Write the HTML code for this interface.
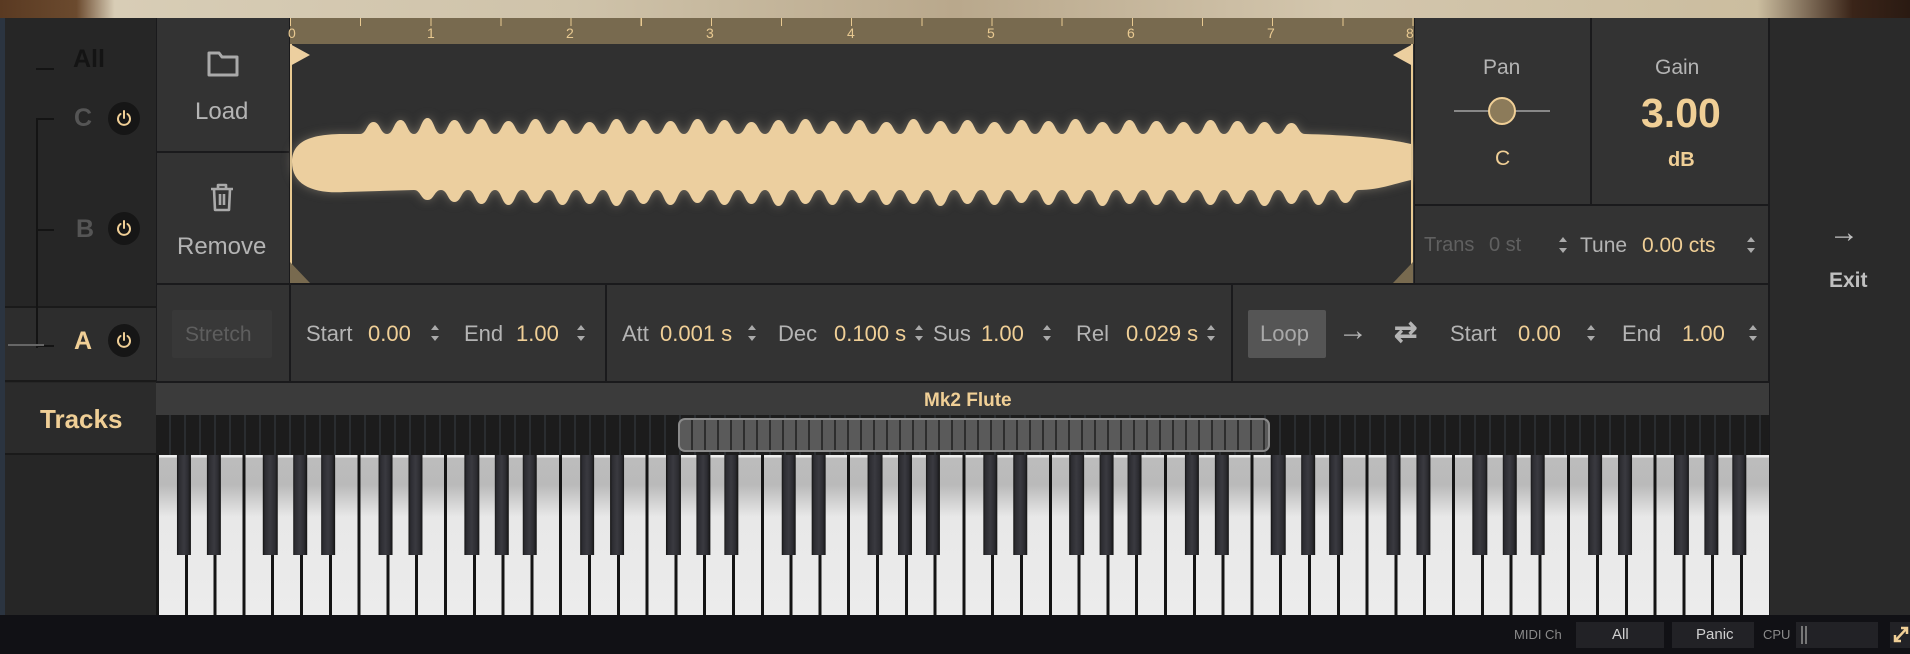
<!DOCTYPE html>
<html><head><meta charset="utf-8"><style>
*{margin:0;padding:0;box-sizing:border-box}
body{width:1910px;height:654px;overflow:hidden;background:#1a1a1c;font-family:"Liberation Sans",sans-serif;position:relative}
.a{position:absolute}
.t{position:absolute;white-space:nowrap;line-height:1}
.g{color:#b4b4b4}.v{color:#f0cf96}
.p{background:#333333}
.arr{position:absolute;width:8px;height:16px}
.arr:before{content:"";position:absolute;left:0;top:0;border-left:4px solid transparent;border-right:4px solid transparent;border-bottom:5px solid #aaa}
.arr:after{content:"";position:absolute;left:0;bottom:0;border-left:4px solid transparent;border-right:4px solid transparent;border-top:5px solid #aaa}
.pw{position:absolute;width:32px;height:33px;border-radius:50%;background:#161616}
.pw svg{position:absolute;left:8px;top:8px}
</style></head><body>
<div class="a" style="left:0;top:0;width:1910px;height:18px;background:linear-gradient(90deg,#5a3a22 0,#6b4a2e 4%,#d8cdb6 6%,#cfc3aa 30%,#b9a88c 50%,#d3c6ad 70%,#cbbd9f 92%,#3a2418 97%,#2a1a12 100%)"></div>
<div class="a" style="left:0;top:18px;width:5px;height:600px;background:#2b3440"></div>
<div class="a" style="left:5px;top:18px;width:151px;height:597px;background:#262626"></div>
<div class="a" style="left:5px;top:306px;width:151px;height:76px;background:#2d2d2d;border-top:2px solid #1a1a1a;border-bottom:2px solid #1a1a1a"></div>
<div class="a" style="left:5px;top:383px;width:151px;height:72px;background:#2b2b2b;border-bottom:2px solid #1a1a1a"></div>
<div class="a" style="left:36px;top:118px;width:2px;height:230px;background:#141414"></div>
<div class="a" style="left:36px;top:68px;width:18px;height:2px;background:#141414"></div>
<div class="a" style="left:36px;top:118px;width:18px;height:2px;background:#141414"></div>
<div class="a" style="left:36px;top:229px;width:18px;height:2px;background:#141414"></div>
<div class="a" style="left:36px;top:345px;width:18px;height:2px;background:#141414"></div>
<div class="a" style="left:8px;top:344px;width:36px;height:2px;background:#666"></div>
<div class="t" style="left:73px;top:47px;font-size:25px;font-weight:bold;color:#141414">All</div>
<div class="t" style="left:74px;top:106px;font-size:25px;font-weight:bold;color:#555">C</div>
<div class="t" style="left:76px;top:217px;font-size:25px;font-weight:bold;color:#555">B</div>
<div class="t" style="left:74px;top:329px;font-size:25px;font-weight:bold;color:#f0cf96">A</div>
<div class="pw" style="left:108px;top:102px"><svg width="16" height="17" viewBox="0 0 16 17"><path d="M8 1v7M4.5 4a6 6 0 1 0 7 0" fill="none" stroke="#f0cf96" stroke-width="2" stroke-linecap="round"/></svg></div>
<div class="pw" style="left:108px;top:212px"><svg width="16" height="17" viewBox="0 0 16 17"><path d="M8 1v7M4.5 4a6 6 0 1 0 7 0" fill="none" stroke="#f0cf96" stroke-width="2" stroke-linecap="round"/></svg></div>
<div class="pw" style="left:108px;top:324px"><svg width="16" height="17" viewBox="0 0 16 17"><path d="M8 1v7M4.5 4a6 6 0 1 0 7 0" fill="none" stroke="#f0cf96" stroke-width="2" stroke-linecap="round"/></svg></div>
<div class="t" style="left:40px;top:406px;font-size:26px;font-weight:bold;color:#f0cf96">Tracks</div>
<div class="a p" style="left:157px;top:18px;width:132px;height:133px"></div>
<div class="a p" style="left:157px;top:153px;width:132px;height:130px"></div>
<svg class="a" style="left:207px;top:50px" width="32" height="27" viewBox="0 0 32 27"><path d="M2 3h10l3 4h15v18H2z" fill="none" stroke="#aaa" stroke-width="3" stroke-linejoin="round"/></svg>
<div class="t g" style="left:195px;top:100px;font-size:24px">Load</div>
<svg class="a" style="left:209px;top:183px" width="26" height="29" viewBox="0 0 26 29"><path d="M2 6h22M9 6V2h8v4M5 6l1 21h14l1-21M11 11v11M15 11v11" fill="none" stroke="#aaa" stroke-width="2.6" stroke-linejoin="round"/></svg>
<div class="t g" style="left:177px;top:235px;font-size:24px">Remove</div>
<div class="a" style="left:290px;top:18px;width:1124px;height:265px;background:#303030"></div>
<div class="a" style="left:290px;top:18px;width:1124px;height:26px;background:#786a4f"></div>
<div class="a" style="left:290px;top:18px;width:1124px;height:26px;background:repeating-linear-gradient(90deg,#e8c991 0 1px,transparent 1px 70.15px);clip-path:inset(0 0 18px 0)"></div>
<div class="t" style="left:288px;top:26px;font-size:14px;color:#e8c991">0</div>
<div class="t" style="left:427px;top:26px;font-size:14px;color:#e8c991">1</div>
<div class="t" style="left:566px;top:26px;font-size:14px;color:#e8c991">2</div>
<div class="t" style="left:706px;top:26px;font-size:14px;color:#e8c991">3</div>
<div class="t" style="left:847px;top:26px;font-size:14px;color:#e8c991">4</div>
<div class="t" style="left:987px;top:26px;font-size:14px;color:#e8c991">5</div>
<div class="t" style="left:1127px;top:26px;font-size:14px;color:#e8c991">6</div>
<div class="t" style="left:1267px;top:26px;font-size:14px;color:#e8c991">7</div>
<div class="t" style="left:1406px;top:26px;font-size:14px;color:#e8c991">8</div>
<div class="a" style="left:290px;top:44px;width:2px;height:239px;background:#e8c991"></div>
<div class="a" style="left:1411px;top:44px;width:2px;height:239px;background:#e8c991"></div>
<svg class="a" style="left:290px;top:44px;overflow:visible;filter:drop-shadow(0 0 5px rgba(170,160,140,.5))" width="1123" height="239" viewBox="0 0 1123 239"><path fill="#eccf9f" d="M2,118 C2,95 25,90 55,90 L70,90 c6.75,0 6.75,-12 13.5,-12 c6.75,0 6.75,12 13.5,12 c6.75,0 6.75,-14 13.5,-14 c6.75,0 6.75,14 13.5,14 c6.75,0 6.75,-16 13.5,-16 c6.75,0 6.75,16 13.5,16 c6.75,0 6.75,-14 13.5,-14 c6.75,0 6.75,14 13.5,14 c6.75,0 6.75,-15 13.5,-15 c6.75,0 6.75,15 13.5,15 c6.75,0 6.75,-13 13.5,-13 c6.75,0 6.75,13 13.5,13 c6.75,0 6.75,-15 13.5,-15 c6.75,0 6.75,15 13.5,15 c6.75,0 6.75,-14 13.5,-14 c6.75,0 6.75,14 13.5,14 c6.75,0 6.75,-12 13.5,-12 c6.75,0 6.75,12 13.5,12 c6.75,0 6.75,-15 13.5,-15 c6.75,0 6.75,15 13.5,15 c6.75,0 6.75,-14 13.5,-14 c6.75,0 6.75,14 13.5,14 c6.75,0 6.75,-13 13.5,-13 c6.75,0 6.75,13 13.5,13 c6.75,0 6.75,-15 13.5,-15 c6.75,0 6.75,15 13.5,15 c6.75,0 6.75,-14 13.5,-14 c6.75,0 6.75,14 13.5,14 c6.75,0 6.75,-12 13.5,-12 c6.75,0 6.75,12 13.5,12 c6.75,0 6.75,-14 13.5,-14 c6.75,0 6.75,14 13.5,14 c6.75,0 6.75,-15 13.5,-15 c6.75,0 6.75,15 13.5,15 c6.75,0 6.75,-13 13.5,-13 c6.75,0 6.75,13 13.5,13 c6.75,0 6.75,-14 13.5,-14 c6.75,0 6.75,14 13.5,14 c6.75,0 6.75,-12 13.5,-12 c6.75,0 6.75,12 13.5,12 c6.75,0 6.75,-15 13.5,-15 c6.75,0 6.75,15 13.5,15 c6.75,0 6.75,-13 13.5,-13 c6.75,0 6.75,13 13.5,13 c6.75,0 6.75,-14 13.5,-14 c6.75,0 6.75,14 13.5,14 c6.75,0 6.75,-12 13.5,-12 c6.75,0 6.75,12 13.5,12 c6.75,0 6.75,-14 13.5,-14 c6.75,0 6.75,14 13.5,14 c6.75,0 6.75,-13 13.5,-13 c6.75,0 6.75,13 13.5,13 c6.75,0 6.75,-15 13.5,-15 c6.75,0 6.75,15 13.5,15 c6.75,0 6.75,-12 13.5,-12 c6.75,0 6.75,12 13.5,12 c6.75,0 6.75,-14 13.5,-14 c6.75,0 6.75,14 13.5,14 c6.75,0 6.75,-13 13.5,-13 c6.75,0 6.75,13 13.5,13 c6.75,0 6.75,-12 13.5,-12 c6.75,0 6.75,12 13.5,12 c6.75,0 6.75,-14 13.5,-14 c6.75,0 6.75,14 13.5,14 c6.75,0 6.75,-13 13.5,-13 c6.75,0 6.75,13 13.5,13 c6.75,0 6.75,-12 13.5,-12 c6.75,0 6.75,12 13.5,12 c6.75,0 6.75,-11 13.5,-11 c6.75,0 6.75,11 13.5,11 C1090,92 1110,98 1121,100 L1121,136 C1110,138 1090,146 1069,146 c-6.75,0 -6.75,13 -13.5,13 c-6.75,0 -6.75,-13 -13.5,-13 c-6.75,0 -6.75,15 -13.5,15 c-6.75,0 -6.75,-15 -13.5,-15 c-6.75,0 -6.75,14 -13.5,14 c-6.75,0 -6.75,-14 -13.5,-14 c-6.75,0 -6.75,16 -13.5,16 c-6.75,0 -6.75,-16 -13.5,-16 c-6.75,0 -6.75,14 -13.5,14 c-6.75,0 -6.75,-14 -13.5,-14 c-6.75,0 -6.75,15 -13.5,15 c-6.75,0 -6.75,-15 -13.5,-15 c-6.75,0 -6.75,13 -13.5,13 c-6.75,0 -6.75,-13 -13.5,-13 c-6.75,0 -6.75,15 -13.5,15 c-6.75,0 -6.75,-15 -13.5,-15 c-6.75,0 -6.75,14 -13.5,14 c-6.75,0 -6.75,-14 -13.5,-14 c-6.75,0 -6.75,16 -13.5,16 c-6.75,0 -6.75,-16 -13.5,-16 c-6.75,0 -6.75,14 -13.5,14 c-6.75,0 -6.75,-14 -13.5,-14 c-6.75,0 -6.75,15 -13.5,15 c-6.75,0 -6.75,-15 -13.5,-15 c-6.75,0 -6.75,13 -13.5,13 c-6.75,0 -6.75,-13 -13.5,-13 c-6.75,0 -6.75,15 -13.5,15 c-6.75,0 -6.75,-15 -13.5,-15 c-6.75,0 -6.75,14 -13.5,14 c-6.75,0 -6.75,-14 -13.5,-14 c-6.75,0 -6.75,16 -13.5,16 c-6.75,0 -6.75,-16 -13.5,-16 c-6.75,0 -6.75,14 -13.5,14 c-6.75,0 -6.75,-14 -13.5,-14 c-6.75,0 -6.75,15 -13.5,15 c-6.75,0 -6.75,-15 -13.5,-15 c-6.75,0 -6.75,13 -13.5,13 c-6.75,0 -6.75,-13 -13.5,-13 c-6.75,0 -6.75,15 -13.5,15 c-6.75,0 -6.75,-15 -13.5,-15 c-6.75,0 -6.75,14 -13.5,14 c-6.75,0 -6.75,-14 -13.5,-14 c-6.75,0 -6.75,16 -13.5,16 c-6.75,0 -6.75,-16 -13.5,-16 c-6.75,0 -6.75,14 -13.5,14 c-6.75,0 -6.75,-14 -13.5,-14 c-6.75,0 -6.75,15 -13.5,15 c-6.75,0 -6.75,-15 -13.5,-15 c-6.75,0 -6.75,13 -13.5,13 c-6.75,0 -6.75,-13 -13.5,-13 c-6.75,0 -6.75,15 -13.5,15 c-6.75,0 -6.75,-15 -13.5,-15 c-6.75,0 -6.75,14 -13.5,14 c-6.75,0 -6.75,-14 -13.5,-14 c-6.75,0 -6.75,16 -13.5,16 c-6.75,0 -6.75,-16 -13.5,-16 c-6.75,0 -6.75,14 -13.5,14 c-6.75,0 -6.75,-14 -13.5,-14 c-6.75,0 -6.75,15 -13.5,15 c-6.75,0 -6.75,-15 -13.5,-15 c-6.75,0 -6.75,13 -13.5,13 c-6.75,0 -6.75,-13 -13.5,-13 c-6.75,0 -6.75,15 -13.5,15 c-6.75,0 -6.75,-15 -13.5,-15 c-6.75,0 -6.75,14 -13.5,14 c-6.75,0 -6.75,-14 -13.5,-14 c-6.75,0 -6.75,12 -13.5,12 c-6.75,0 -6.75,-12 -13.5,-12 c-6.75,0 -6.75,10 -13.5,10 c-6.75,0 -6.75,-10 -13.5,-10 L55,148 C25,150 2,142 2,118 Z"/></svg>
<svg class="a" style="left:290px;top:44px" width="22" height="22"><path d="M0 0L20 11L0 22Z" fill="#eccf9f"/></svg>
<svg class="a" style="left:1391px;top:44px" width="22" height="22"><path d="M22 0L2 11L22 22Z" fill="#eccf9f"/></svg>
<svg class="a" style="left:290px;top:262px" width="22" height="21"><path d="M0 0L20 21L0 21Z" fill="#786a4f"/></svg>
<svg class="a" style="left:1391px;top:262px" width="22" height="21"><path d="M22 0L2 21L22 21Z" fill="#786a4f"/></svg>
<div class="a p" style="left:1415px;top:18px;width:175px;height:186px"></div>
<div class="a p" style="left:1592px;top:18px;width:176px;height:186px"></div>
<div class="t g" style="left:1483px;top:57px;font-size:21px">Pan</div>
<div class="a" style="left:1454px;top:110px;width:96px;height:2px;background:#888"></div>
<div class="a" style="left:1488px;top:97px;width:28px;height:28px;border-radius:50%;background:#8c7b5a;border:2px solid #f0cf96"></div>
<div class="t v" style="left:1495px;top:148px;font-size:21px">C</div>
<div class="t g" style="left:1655px;top:57px;font-size:21px">Gain</div>
<div class="t v" style="left:1641px;top:93px;font-size:41px;font-weight:bold">3.00</div>
<div class="t v" style="left:1668px;top:150px;font-size:20px;font-weight:bold">dB</div>
<div class="a p" style="left:1415px;top:206px;width:353px;height:77px"></div>
<div class="t" style="left:1424px;top:235px;font-size:20px;color:#606060">Trans</div>
<div class="t" style="left:1489px;top:235px;font-size:20px;color:#606060">0 st</div>
<div class="arr" style="left:1559px;top:237px"></div>
<div class="t g" style="left:1580px;top:235px;font-size:21px">Tune</div>
<div class="t v" style="left:1642px;top:235px;font-size:21px">0.00 cts</div>
<div class="arr" style="left:1747px;top:237px"></div>
<div class="a" style="left:1770px;top:18px;width:140px;height:597px;background:#2a2a2a"></div>
<div class="t" style="left:1829px;top:218px;font-size:30px;font-weight:bold;color:#c0c0c0">→</div>
<div class="t" style="left:1829px;top:270px;font-size:21px;font-weight:bold;color:#c0c0c0">Exit</div>
<div class="a p" style="left:157px;top:285px;width:132px;height:96px"></div>
<div class="a" style="left:172px;top:310px;width:100px;height:48px;background:#383838;border-radius:2px"></div>
<div class="t" style="left:185px;top:324px;font-size:21px;color:#5e5e5e">Stretch</div>
<div class="a p" style="left:291px;top:285px;width:314px;height:96px"></div>
<div class="t g" style="left:306px;top:323px;font-size:22px">Start</div>
<div class="t v" style="left:368px;top:323px;font-size:22px">0.00</div>
<div class="arr" style="left:431px;top:325px"></div>
<div class="t g" style="left:464px;top:323px;font-size:22px">End</div>
<div class="t v" style="left:516px;top:323px;font-size:22px">1.00</div>
<div class="arr" style="left:577px;top:325px"></div>
<div class="a p" style="left:607px;top:285px;width:624px;height:96px"></div>
<div class="t g" style="left:622px;top:323px;font-size:22px">Att</div>
<div class="t v" style="left:660px;top:323px;font-size:22px">0.001 s</div>
<div class="arr" style="left:748px;top:325px"></div>
<div class="t g" style="left:778px;top:323px;font-size:22px">Dec</div>
<div class="t v" style="left:834px;top:323px;font-size:22px">0.100 s</div>
<div class="arr" style="left:915px;top:325px"></div>
<div class="t g" style="left:933px;top:323px;font-size:22px">Sus</div>
<div class="t v" style="left:981px;top:323px;font-size:22px">1.00</div>
<div class="arr" style="left:1043px;top:325px"></div>
<div class="t g" style="left:1076px;top:323px;font-size:22px">Rel</div>
<div class="t v" style="left:1126px;top:323px;font-size:22px">0.029 s</div>
<div class="arr" style="left:1207px;top:325px"></div>
<div class="a p" style="left:1233px;top:285px;width:535px;height:96px"></div>
<div class="a" style="left:1248px;top:310px;width:78px;height:48px;background:#555;border-radius:2px"></div>
<div class="t" style="left:1260px;top:323px;font-size:22px;color:#a8a8a8">Loop</div>
<div class="t g" style="left:1338px;top:316px;font-size:30px;font-weight:bold">→</div>
<div class="t g" style="left:1394px;top:318px;font-size:28px;font-weight:bold">⇄</div>
<div class="t g" style="left:1450px;top:323px;font-size:22px">Start</div>
<div class="t v" style="left:1518px;top:323px;font-size:22px">0.00</div>
<div class="arr" style="left:1587px;top:325px"></div>
<div class="t g" style="left:1622px;top:323px;font-size:22px">End</div>
<div class="t v" style="left:1682px;top:323px;font-size:22px">1.00</div>
<div class="arr" style="left:1749px;top:325px"></div>
<div class="a" style="left:156px;top:383px;width:1613px;height:32px;background:#3b3b3b"></div>
<div class="t v" style="left:924px;top:391px;font-size:19px;font-weight:bold">Mk2 Flute</div>
<div class="a" style="left:156px;top:415px;width:1613px;height:40px;background:#1c1c1c repeating-linear-gradient(90deg,#1c1c1c 0 13px,#2a2d30 13px 15px)"></div>
<div class="a" style="left:678px;top:418px;width:592px;height:34px;border-radius:7px;border:2px solid #8a8a8a;background:repeating-linear-gradient(90deg,#5a5a5a 0 11px,#2e2e2e 11px 13px)"></div>
<div class="a" style="left:156px;top:455px;width:1613px;height:160px;background:linear-gradient(#ededed 0 2px,#bcbcbc 3px,#bababa 30px,#e8e8e8 62px,#ececec 100%)"></div>
<div class="a" style="left:156px;top:455px;width:1613px;height:160px;background:repeating-linear-gradient(90deg,#141414 0 3px,transparent 3px 28.8px)"></div>
<div class="a" style="left:156px;top:455px;width:1613px;height:100px;background-image:linear-gradient(90deg,transparent 21px,#141414 21px,#2c2c31 23px,#3a3a40 28px,#2c2c31 32px,#141414 35px,transparent 35px,transparent 51px,#141414 51px,#2c2c31 53px,#3a3a40 58px,#2c2c31 62px,#141414 65px,transparent 65px,transparent 107px,#141414 107px,#2c2c31 109px,#3a3a40 114px,#2c2c31 119px,#141414 122px,transparent 122px,transparent 137px,#141414 137px,#2c2c31 139px,#3a3a40 144px,#2c2c31 148px,#141414 151px,transparent 151px,transparent 165px,#141414 165px,#2c2c31 167px,#3a3a40 172px,#2c2c31 176px,#141414 179px,transparent 179px);background-size:201.6px 100%;background-repeat:repeat-x"></div>
<div class="a" style="left:0;top:615px;width:1910px;height:39px;background:#111115"></div>
<div class="t" style="left:1514px;top:628px;font-size:13px;color:#8a8a8a">MIDI Ch</div>
<div class="a" style="left:1576px;top:622px;width:88px;height:26px;background:#222226"></div>
<div class="t" style="left:1612px;top:627px;font-size:15px;color:#d0d0d0">All</div>
<div class="a" style="left:1672px;top:622px;width:82px;height:26px;background:#222226"></div>
<div class="t" style="left:1696px;top:627px;font-size:15px;color:#d0d0d0">Panic</div>
<div class="t" style="left:1763px;top:628px;font-size:13px;color:#8a8a8a">CPU</div>
<div class="a" style="left:1796px;top:622px;width:82px;height:26px;background:#222226"></div>
<div class="a" style="left:1801px;top:626px;width:2px;height:18px;background:#777"></div>
<div class="a" style="left:1805px;top:626px;width:2px;height:18px;background:#777"></div>
<div class="a" style="left:1890px;top:622px;width:20px;height:26px;background:#222226"></div>
<svg class="a" style="left:1892px;top:624px" width="18" height="20" viewBox="0 0 18 20"><path d="M3 17L15 4M9 4h6v6M3 11v6h6" fill="none" stroke="#f0cf96" stroke-width="2.5"/></svg>
</body></html>
